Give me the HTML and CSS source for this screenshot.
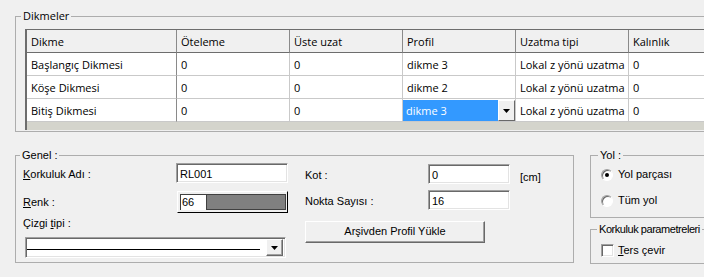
FILE: index.html
```html
<!DOCTYPE html>
<html lang="tr">
<head>
<meta charset="utf-8">
<title>Korkuluk</title>
<link rel="stylesheet" href="styles.css">
</head>
<body>
<fieldset class="group group-dikmeler">
  <legend class="legend-ui">Dikmeler</legend>
  <div class="grid">
    <div class="hcell first">Dikme</div>
    <div class="hcell">Öteleme</div>
    <div class="hcell">Üste uzat</div>
    <div class="hcell">Profil</div>
    <div class="hcell">Uzatma tipi</div>
    <div class="hcell">Kalınlık</div>

    <div class="cell first">Başlangıç Dikmesi</div>
    <div class="cell">0</div>
    <div class="cell">0</div>
    <div class="cell">dikme 3</div>
    <div class="cell">Lokal z yönü uzatma</div>
    <div class="cell">0</div>

    <div class="cell first">Köşe Dikmesi</div>
    <div class="cell">0</div>
    <div class="cell">0</div>
    <div class="cell">dikme 2</div>
    <div class="cell">Lokal z yönü uzatma</div>
    <div class="cell">0</div>

    <div class="cell first">Bitiş Dikmesi</div>
    <div class="cell">0</div>
    <div class="cell">0</div>
    <div class="cell editing"><span class="sel">dikme 3</span><span class="dd-btn"><svg width="7" height="4" viewBox="0 0 7 4"><polygon points="0,0 7,0 3.5,4" fill="#000"/></svg></span></div>
    <div class="cell">Lokal z yönü uzatma</div>
    <div class="cell">0</div>

    <div class="band"></div>
  </div>
</fieldset>

<div class="bottom">
  <fieldset class="group group-genel">
    <legend class="legend-genel">Genel :</legend>
    <div class="genel-body">
      <div class="col-left">
        <div class="frow r1"><span class="lbl lbl-l1"><u>K</u>orkuluk Adı :</span><span class="edit w112">RL001</span></div>
        <div class="frow r2"><span class="lbl lbl-l2"><u>R</u>enk :</span><span class="renk"><span class="renk-num">66</span><span class="renk-swatch"></span></span></div>
        <div class="lbl r3">Çizgi <u>t</u>ipi :</div>
        <div class="combo"><span class="combo-line"></span><span class="combo-btn"><svg width="7" height="4" viewBox="0 0 7 4"><polygon points="0,0 7,0 3.5,4" fill="#000"/></svg></span></div>
      </div>
      <div class="col-right">
        <div class="frow k1"><span class="lbl lbl-r">Kot :</span><span class="edit w82">0</span><span class="unit">[cm]</span></div>
        <div class="frow k2"><span class="lbl lbl-r">Nokta Sayısı :</span><span class="edit w82">16</span></div>
        <div class="btn">Arşivden Profil Yükle</div>
      </div>
    </div>
  </fieldset>

  <div class="side">
    <fieldset class="group group-yol">
      <legend class="legend-yol">Yol :</legend>
      <div class="radios">
        <div class="opt opt1"><span class="radio checked"></span><span>Yol parçası</span></div>
        <div class="opt opt2"><span class="radio"></span><span>Tüm yol</span></div>
      </div>
    </fieldset>
    <fieldset class="group group-param">
      <legend class="legend-param">Korkuluk parametreleri</legend>
      <div class="opt opt3"><span class="check"></span><span><u>T</u>ers çevir</span></div>
    </fieldset>
  </div>
</div>
</body>
</html>
```

FILE: styles.css
```css
* { box-sizing: border-box; }

html, body {
  margin: 0;
  padding: 0;
  overflow: hidden;
}

body {
  width: 704px;
  height: 277px;
  background: #f0f0f0;
  color: #000;
  font-family: "Liberation Sans", Arial, sans-serif;
  font-size: 11px;
  line-height: 13px;
}

u { text-decoration: underline; text-underline-offset: 1px; }

/* ---------- group boxes ---------- */
.group {
  margin: 0;
  padding: 0;
  border: 1px solid #adadad;
  min-inline-size: 0;
}

.group > legend {
  padding: 0 2px;
  line-height: 13px;
  white-space: nowrap;
}

.group-dikmeler {
  margin: 9px 0 0 15px;
  width: 740px;
  padding-bottom: 1px;
}

.legend-ui {
  font-family: "Open Sans", "Noto Sans", sans-serif;
  font-size: 11px;
  margin-left: 5px;
}
.group > .legend-ui { line-height: 14px; }

/* ---------- data grid ---------- */
.grid {
  margin: 6px 0 0 9px;
  width: 717px;
  display: grid;
  grid-template-columns: 150px repeat(5, 113px);
  border-top: 1px solid #6d6d6d;
  border-left: 2px solid #6d6d6d;
  font-family: "Open Sans", "Noto Sans", sans-serif;
  font-size: 11px;
}

.hcell, .cell {
  height: 23px;
  padding: 2px 0 0 4px;
  line-height: 20px;
  white-space: nowrap;
  overflow: hidden;
}

.hcell {
  background: #f0f0f0;
  border-right: 1px solid #8a8a8a;
  border-bottom: 1px solid #6d6d6d;
}

.cell {
  background: #fff;
  border-right: 1px solid #c9c9c9;
  border-bottom: 1px solid #c9c9c9;
}

.cell.first {
  border-right-color: #8a8a8a;
}

.cell.editing {
  display: flex;
  padding: 1px 0 0 0;
}

.sel {
  width: 95px;
  height: 21px;
  padding: 1px 0 0 3px;
  line-height: 20px;
  background: #3399ff;
  color: #fff;
}

.dd-btn {
  width: 17px;
  height: 21px;
  display: flex;
  align-items: center;
  justify-content: center;
  background: #f0f0f0;
  border: 1px solid;
  border-color: #fff #696969 #696969 #fff;
}

.band {
  grid-column: 1 / -1;
  height: 8px;
  background: #d4d4cc;
}

/* ---------- bottom area ---------- */
.bottom {
  display: flex;
  align-items: flex-start;
  margin: 17px 0 0 15px;
}

.group-genel {
  flex: none;
  width: 559px;
  padding-bottom: 4px;
}

.legend-genel { margin-left: 4px; }

.genel-body {
  display: flex;
  gap: 16px;
  padding-left: 7px;
}

.col-left {
  width: 266px;
  flex: none;
  display: flex;
  flex-direction: column;
}

.col-right {
  display: flex;
  flex-direction: column;
}

.frow {
  display: flex;
  align-items: baseline;
}

.r1 { margin-top: 1px; }
.r2 { margin-top: 8px; }
.r3 { margin-top: 4px; }

.lbl-l1 { width: 153px; flex: none; }
.lbl-l2 { width: 154px; flex: none; }
.lbl-r  { width: 123px; flex: none; }

.k1 { margin-top: 2px; }
.k2 { margin-top: 6px; }

.edit {
  flex: none;
  height: 20px;
  padding: 2px 3px 0;
  line-height: 16px;
  background: #fff;
  border: 1px solid;
  border-color: #a0a0a0 #fff #fff #a0a0a0;
  box-shadow: inset 1px 1px #696969, inset -1px -1px #e3e3e3;
}

.w112 { width: 112px; }
.w82 { width: 82px; }

.unit {
  margin-left: 10px;
  position: relative;
  top: 2px;
}

.renk {
  flex: none;
  width: 111px;
  height: 22px;
  display: flex;
  padding: 2px 1px 2px 2px;
  border: 1px solid;
  border-color: #fff #000 #000 #fff;
}

.renk-num {
  width: 26px;
  padding-left: 1px;
  line-height: 14px;
  background: #fff;
  border-top: 1px solid #404040;
  border-left: 1px solid #404040;
}

.renk-swatch {
  flex: 1;
  background: #808080;
  border: 1px solid #404040;
}

.combo {
  margin: 7px 0 0 2px;
  width: 261px;
  height: 21px;
  display: flex;
  align-items: center;
  background: #fff;
  border: 1px solid;
  border-color: #a0a0a0 #fff #fff #a0a0a0;
  box-shadow: inset 1px 1px #696969, inset -1px -1px #e3e3e3;
}

.combo-line {
  flex: 1;
  height: 1px;
  margin: 0 0 0 1px;
  align-self: flex-start;
  margin-top: 11px;
  background: #000;
}

.combo-btn {
  width: 17px;
  height: 17px;
  margin: 0 2px 0 6px;
  display: flex;
  align-items: center;
  justify-content: center;
  background: #f0f0f0;
  border: 1px solid;
  border-color: #fff #696969 #696969 #fff;
  box-shadow: inset -1px -1px #a0a0a0;
}

.btn {
  margin-top: 11px;
  width: 180px;
  height: 22px;
  line-height: 19px;
  text-align: center;
  background: #f0f0f0;
  border: 1px solid;
  border-color: #fff #696969 #696969 #fff;
  box-shadow: inset -1px -1px #a0a0a0;
}

/* ---------- right side ---------- */
.side {
  flex: none;
  width: 140px;
  margin-left: 16px;
  display: flex;
  flex-direction: column;
}

.group-yol {
  width: 140px;
  padding-bottom: 10px;
}

.legend-yol { margin-left: 7px; }

.radios {
  padding-left: 10px;
}

.opt {
  display: flex;
  align-items: center;
  gap: 5px;
  line-height: 13px;
  white-space: nowrap;
}

.opt1 { margin-top: 6px; }
.opt2 { margin-top: 13px; }

.radio {
  flex: none;
  position: relative;
  width: 12px;
  height: 12px;
  border-radius: 50%;
  background: #fff;
  border: 1px solid;
  border-color: #a0a0a0 #fff #fff #a0a0a0;
  box-shadow: inset 1px 1px #696969;
}

.radio.checked::after {
  content: "";
  position: absolute;
  left: 3px;
  top: 3px;
  width: 4px;
  height: 4px;
  border-radius: 50%;
  background: #000;
}

.group-param {
  width: 140px;
  margin-top: 5px;
  padding: 0 0 6px 10px;
}

.legend-param {
  margin-left: -4px;
  letter-spacing: -0.45px;
}

.opt3 {
  margin-top: 8px;
  gap: 4px;
}

.check {
  flex: none;
  width: 13px;
  height: 13px;
  background: #fff;
  border: 1px solid;
  border-color: #a0a0a0 #fff #fff #a0a0a0;
  box-shadow: inset 1px 1px #696969, inset -1px -1px #e3e3e3;
}
```
